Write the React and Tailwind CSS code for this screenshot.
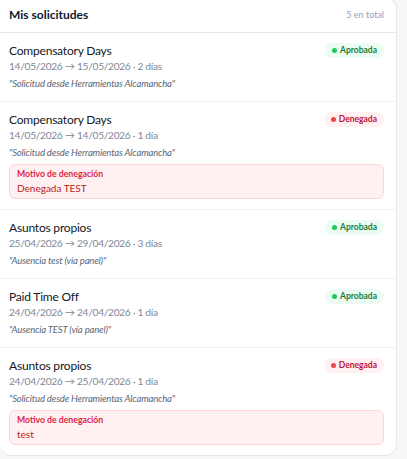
import React from 'react';

const requests = [
  { type: 'Compensatory Days', from: '14/05/2026', to: '15/05/2026', days: '2 días', note: 'Solicitud desde Herramientas Alcamancha', status: 'approved' },
  { type: 'Compensatory Days', from: '14/05/2026', to: '14/05/2026', days: '1 día', note: 'Solicitud desde Herramientas Alcamancha', status: 'denied', reason: 'Denegada TEST' },
  { type: 'Asuntos propios', from: '25/04/2026', to: '29/04/2026', days: '3 días', note: 'Ausencia test (vía panel)', status: 'approved' },
  { type: 'Paid Time Off', from: '24/04/2026', to: '24/04/2026', days: '1 día', note: 'Ausencia TEST (vía panel)', status: 'approved' },
  { type: 'Asuntos propios', from: '24/04/2026', to: '25/04/2026', days: '1 día', note: 'Solicitud desde Herramientas Alcamancha', status: 'denied', reason: 'test' },
];

const StatusBadge = ({ status }) => {
  if (status === 'approved') {
    return (
      <span className="flex items-center gap-[3px] rounded-full bg-[#edfcf2] px-[7px] h-[15px] text-[8.5px] font-bold text-[#15803d]">
        <span className="w-[5px] h-[5px] rounded-full bg-[#22c55e]" />
        Aprobada
      </span>
    );
  }
  return (
    <span className="flex items-center gap-[3px] rounded-full bg-[#fff0f1] px-[7px] h-[15px] text-[8.5px] font-bold text-[#be123c]">
      <span className="w-[5px] h-[5px] rounded-full bg-[#ef4444]" />
      Denegada
    </span>
  );
};

const RequestRow = ({ req }) => (
  <div className="border-b border-[#eef0f4] last:border-b-0 pl-[9px] pr-3 pt-[9px] pb-[10px]">
    <div className="flex items-start justify-between">
      <div className="min-w-0">
        <div className="text-[12px] leading-[17px] tracking-[-0.2px] text-[#111827]">{req.type}</div>
        <div className="text-[10.2px] leading-[15px] tracking-[-0.3px] text-[#7d889a]">
          {req.from} → {req.to} · {req.days}
        </div>
        <div className="mt-[2px] text-[9.5px] leading-[15px] tracking-[-0.15px] italic text-[#5b6678]">"{req.note}"</div>
      </div>
      <div className="pt-[1px]">
        <StatusBadge status={req.status} />
      </div>
    </div>
    {req.reason && (
      <div className="mt-[4px] rounded-md border border-[#fdd5d9] bg-[#fff1f2] px-[7px] pt-[2px] pb-[2px]">
        <div className="text-[8.7px] leading-[13px] font-bold text-[#e11d48]">Motivo de denegación</div>
        <div className="text-[10px] leading-[16px] text-[#b91c1c]">{req.reason}</div>
      </div>
    )}
  </div>
);

export default function App() {
  return (
    <div className="min-h-screen bg-[#f6f7f9] pb-1" style={{ fontFamily: 'Lato, "Noto Sans", sans-serif' }}>
      <div className="w-[397px] -mt-[3px] bg-white border border-l-0 border-[#e6e8ee] rounded-r-xl rounded-bl-xl overflow-hidden">
        <div className="flex items-center justify-between border-b border-[#e6e8f0] pl-[9px] pr-3 h-[35px]">
          <h2 className="text-[12px] font-bold text-[#0f172a]">Mis solicitudes</h2>
          <span className="text-[9px] text-[#94a3b8]">5 en total</span>
        </div>
        {requests.map((r, i) => (
          <RequestRow key={i} req={r} />
        ))}
      </div>
    </div>
  );
}
